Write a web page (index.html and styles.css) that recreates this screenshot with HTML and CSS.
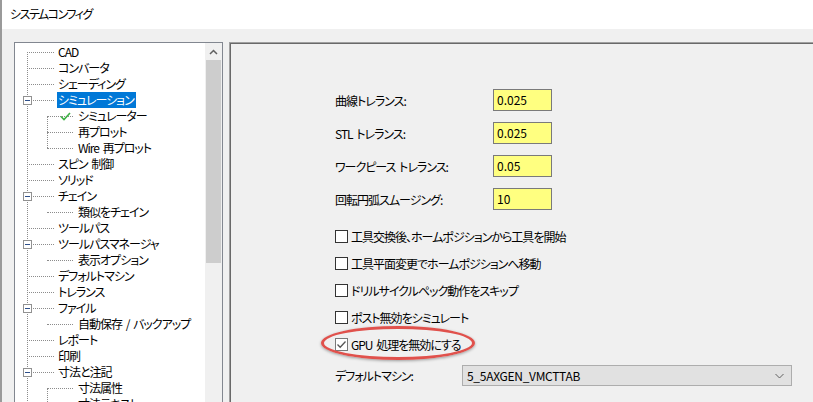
FILE: index.html
```html
<!DOCTYPE html>
<html lang="ja">

<head>
    <meta charset="UTF-8">
    <title>システムコンフィグ</title>
    <link rel="stylesheet" href="styles.css">
</head>

<body>
    <div class="window">
        <div class="titlebar">システムコンフィグ</div>

        <div class="content">
            <!-- 左側ツリー -->
            <div class="tree-panel">
                <div class="tree">
                    <div class="row"><span class="lbl">CAD</span></div>
                    <div class="row"><span class="lbl">コンバータ</span></div>
                    <div class="row"><span class="lbl">シェーディング</span></div>
                    <div class="row has-box"><span class="box"></span><span class="lbl selected">シミュレーション</span></div>
                    <div class="group">
                        <div class="row sub">
                            <svg class="check" width="11" height="9" viewBox="0 0 11 9"><polyline points="1,4.5 4,7.5 10,1" fill="none" stroke="#3cb043" stroke-width="1.6"/></svg>
                            <span class="lbl">シミュレーター</span>
                        </div>
                        <div class="row sub"><span class="lbl">再プロット</span></div>
                        <div class="row sub"><span class="lbl">Wire 再プロット</span></div>
                    </div>
                    <div class="row"><span class="lbl">スピン 制御</span></div>
                    <div class="row"><span class="lbl">ソリッド</span></div>
                    <div class="row has-box"><span class="box"></span><span class="lbl">チェイン</span></div>
                    <div class="group">
                        <div class="row sub"><span class="lbl">類似をチェイン</span></div>
                    </div>
                    <div class="row"><span class="lbl">ツールパス</span></div>
                    <div class="row has-box"><span class="box"></span><span class="lbl">ツールパスマネージャ</span></div>
                    <div class="group">
                        <div class="row sub"><span class="lbl">表示オプション</span></div>
                    </div>
                    <div class="row"><span class="lbl">デフォルトマシン</span></div>
                    <div class="row"><span class="lbl">トレランス</span></div>
                    <div class="row has-box"><span class="box"></span><span class="lbl">ファイル</span></div>
                    <div class="group">
                        <div class="row sub"><span class="lbl">自動保存 / バックアップ</span></div>
                    </div>
                    <div class="row"><span class="lbl">レポート</span></div>
                    <div class="row"><span class="lbl">印刷</span></div>
                    <div class="row has-box"><span class="box"></span><span class="lbl">寸法と注記</span></div>
                    <div class="group open">
                        <div class="row sub"><span class="lbl">寸法属性</span></div>
                        <div class="row sub"><span class="lbl">寸法テキスト</span></div>
                    </div>
                </div>

                <div class="vscroll">
                    <div class="arrow">
                        <svg width="9" height="6" viewBox="0 0 9 6"><polyline points="1,5 4.5,1.5 8,5" fill="none" stroke="#606060" stroke-width="1.5"/></svg>
                    </div>
                    <div class="thumb"></div>
                </div>
            </div>

            <!-- 右側設定 -->
            <div class="settings">
                <div class="form">
                    <span class="label">曲線トレランス:</span><div class="field">0.025</div>
                    <span class="label">STL トレランス:</span><div class="field">0.025</div>
                    <span class="label">ワークピース トレランス:</span><div class="field">0.05</div>
                    <span class="label">回転円弧スムージング:</span><div class="field">10</div>
                </div>

                <div class="checks">
                    <div class="cb"><span class="cbox"></span>工具交換後、ホームポジションから工具を開始</div>
                    <div class="cb"><span class="cbox"></span>工具平面変更でホームポジションへ移動</div>
                    <div class="cb"><span class="cbox"></span>ドリルサイクルペック動作をスキップ</div>
                    <div class="cb"><span class="cbox"></span>ポスト無効をシミュレート</div>
                    <div class="cb marked">
                        <span class="cbox checked">
                            <svg width="11" height="11" viewBox="0 0 11 11"><polyline points="1.5,5.5 4.2,8.3 9.5,2.5" fill="none" stroke="#555" stroke-width="1.3"/></svg>
                        </span>GPU 処理を無効にする
                    </div>
                </div>

                <div class="machine">
                    <span class="label">デフォルトマシン:</span>
                    <div class="combo">
                        <span>5_5AXGEN_VMCTTAB</span>
                        <svg width="9" height="6" viewBox="0 0 9 6"><polyline points="0.5,1 4.5,5 8.5,1" fill="none" stroke="#606060" stroke-width="1"/></svg>
                    </div>
                </div>

                <div class="highlight"></div>
            </div>
        </div>
    </div>
</body>

</html>
```

FILE: styles.css
```css
* {
    box-sizing: border-box;
}

body {
    margin: 0;
    background-color: #f0f0f0;
    font-family: "Noto Sans CJK JP", "Noto Sans", sans-serif;
    font-size: 12px;
    color: #000;
    letter-spacing: -1px;
    word-spacing: 2px;
    overflow: hidden;
}

.window {
    width: 813px;
    height: 402px;
    border-left: 2px solid #9a9a9a;
    overflow: hidden;
}

.titlebar {
    height: 29px;
    line-height: 28px;
    padding-left: 8px;
    background-color: #fff;
    letter-spacing: -1.5px;
    font-feature-settings: "palt";
}

.content {
    display: flex;
    align-items: flex-start;
    padding: 13px 0 0 12px;
}

/* ツリー */
.tree-panel {
    width: 209px;
    height: 400px;
    flex-shrink: 0;
    display: flex;
    background-color: #fff;
    border: 1px solid #828790;
}

.tree {
    position: relative;
    flex: 1;
    padding-top: 1px;
    font-feature-settings: "palt";
}

.tree::before {
    content: "";
    position: absolute;
    left: 12px;
    top: 9px;
    bottom: 0;
    border-left: 1px dotted #8c8c8c;
}

.row {
    position: relative;
    height: 16px;
    line-height: 16px;
    white-space: nowrap;
}

.row::before {
    content: "";
    position: absolute;
    left: 12px;
    top: 8px;
    width: 27px;
    border-top: 1px dotted #8c8c8c;
}

.lbl {
    display: inline-block;
    margin-left: 42px;
    padding: 0 2px 0 1px;
    height: 16px;
}

.lbl.selected {
    background-color: #0078d7;
    color: #fff;
}

.box {
    position: absolute;
    left: 8px;
    top: 4px;
    width: 9px;
    height: 9px;
    background-color: #fff;
    border: 1px solid #919191;
    z-index: 1;
}

.box::after {
    content: "";
    position: absolute;
    left: 1px;
    top: 3px;
    width: 5px;
    height: 1px;
    background-color: #2d4f8a;
}

.group {
    position: relative;
}

.group::before {
    content: "";
    position: absolute;
    left: 32px;
    top: 8px;
    bottom: 8px;
    border-left: 1px dotted #8c8c8c;
}

.group.open::before {
    bottom: 0;
}

.row.sub::before {
    left: 32px;
    width: 26px;
}

.row.sub .lbl {
    margin-left: 62px;
}

.check {
    position: absolute;
    left: 45px;
    top: 4px;
}

.vscroll {
    width: 17px;
    background-color: #f0f0f0;
}

.arrow {
    height: 17px;
    display: flex;
    align-items: center;
    justify-content: center;
}

.thumb {
    height: 203px;
    margin: 0 1px 0 1px;
    background-color: #cdcdcd;
}

/* 設定パネル */
.settings {
    position: relative;
    flex: 1;
    height: 400px;
    margin-left: 6px;
    padding: 46px 0 0 105px;
    border-top: 1px solid #a0a0a0;
    border-left: 1px solid #a0a0a0;
    box-shadow: inset 1px 1px 0 #696969;
    font-feature-settings: "palt";
}

.form {
    display: grid;
    grid-template-columns: 158px 59px;
    grid-auto-rows: 22px;
    row-gap: 11px;
    align-items: center;
}

.field {
    height: 22px;
    line-height: 20px;
    padding-left: 3px;
    letter-spacing: 0;
    background-color: #ffff80;
    border: 1px solid #7a7a7a;
}

.checks {
    margin-top: 13px;
}

.cb {
    height: 27px;
    display: flex;
    align-items: center;
    white-space: pre;
}

.cbox {
    width: 13px;
    height: 13px;
    margin-right: 3px;
    background-color: #fff;
    border: 1px solid #333;
    display: flex;
    align-items: center;
    justify-content: center;
}

.cb.marked {
    white-space: nowrap;
}

.cbox.checked {
    border-color: #7a7a7a;
}

.machine {
    margin-top: 7px;
    display: flex;
    align-items: center;
    height: 21px;
}

.machine .label {
    width: 127px;
}

.combo {
    width: 330px;
    height: 21px;
    padding: 0 7px 0 4px;
    display: flex;
    align-items: center;
    justify-content: space-between;
    letter-spacing: -0.3px;
    background-color: #e1e1e1;
    border: 1px solid #adadad;
}

.highlight {
    position: absolute;
    left: 91px;
    top: 283px;
    width: 154px;
    height: 34px;
    border: 3px solid #e0514c;
    border-radius: 50%;
    box-shadow: 0 1px 3px rgba(0, 0, 0, 0.35);
}
```
